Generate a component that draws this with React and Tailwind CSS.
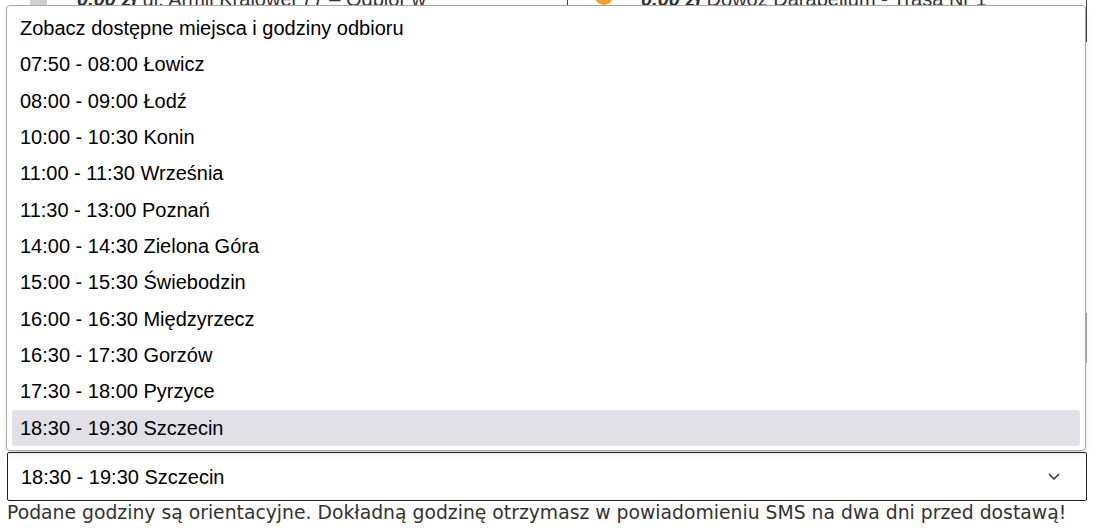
import React from "react";

const options = [
  "Zobacz dostępne miejsca i godziny odbioru",
  "07:50 - 08:00 Łowicz",
  "08:00 - 09:00 Łodź",
  "10:00 - 10:30 Konin",
  "11:00 - 11:30 Września",
  "11:30 - 13:00 Poznań",
  "14:00 - 14:30 Zielona Góra",
  "15:00 - 15:30 Świebodzin",
  "16:00 - 16:30 Międzyrzecz",
  "16:30 - 17:30 Gorzów",
  "17:30 - 18:00 Pyrzyce",
  "18:30 - 19:30 Szczecin",
];

const App = () => {
  const selected = options[options.length - 1];

  return (
    <div className="relative h-[531px] w-full overflow-hidden bg-white [font-family:Liberation_Sans,Arial,sans-serif]">
      {/* Content behind the open list */}
      <div className="h-[452px] pl-[7px] pr-[11px]">
        <div className="flex h-[42px]">
          <div className="flex h-[5px] w-[560px] items-end overflow-hidden">
            <div className="flex items-end gap-[30px] pl-[23px]">
              <div className="h-[18px] w-[17px] bg-[#d0d0d0]" />
              <span className="translate-y-[4px] text-[20px] leading-none text-[#333]">
                <b className="italic">0,00 zł</b> ul. Armii Krajowej 77 – Odbiór w
              </span>
            </div>
          </div>
          <div className="flex w-[520px] flex-col border-x border-x-[#444]">
            <div className="flex h-[5px] items-end gap-[28px] overflow-hidden pl-[27px]">
              <div className="h-[18px] w-[18px] rounded-full bg-[#f0a030]" />
              <span className="translate-y-[4px] text-[20px] leading-none text-[#333]">
                <b className="italic">0,00 zł</b> Dowóz Darabellum - Trasa Nr 1
              </span>
            </div>
          </div>
        </div>
        <div className="ml-auto mt-[271px] h-[50px] w-[1080px] border-r border-r-[#aaa]" />
      </div>

      {/* Select box */}
      <div className="mx-[7px] flex h-[49px] w-[1080px] items-center justify-between rounded-[2px] border border-[#222] pl-[13px] pr-[26px]">
        <span className="text-[20px] text-black">{selected}</span>
        <svg width="12" height="7" viewBox="0 0 12 7" fill="none">
          <path d="M1 1l5 5 5-5" stroke="#333" strokeWidth="1.5" />
        </svg>
      </div>
      <p className="pl-[7px] pt-[2px] text-[18.8px] leading-[20px] text-[#333] [font-family:DejaVu_Sans,sans-serif]">
        Podane godziny są orientacyjne. Dokładną godzinę otrzymasz w powiadomieniu SMS na dwa dni przed dostawą!
      </p>

      {/* Open dropdown list */}
      <div className="absolute left-[6px] top-[5px] h-[446px] w-[1080px] rounded-[4px] border border-[#a8a8a8] bg-white px-[5px] py-[4px] shadow-md">
        {options.map((opt) => (
          <div
            key={opt}
            className={`flex h-[36.33px] items-center rounded-[3px] pl-[8px] text-[20px] text-black ${
              opt === selected ? "bg-[#e1e0e6]" : ""
            }`}
          >
            {opt}
          </div>
        ))}
      </div>
    </div>
  );
};

export default App;
